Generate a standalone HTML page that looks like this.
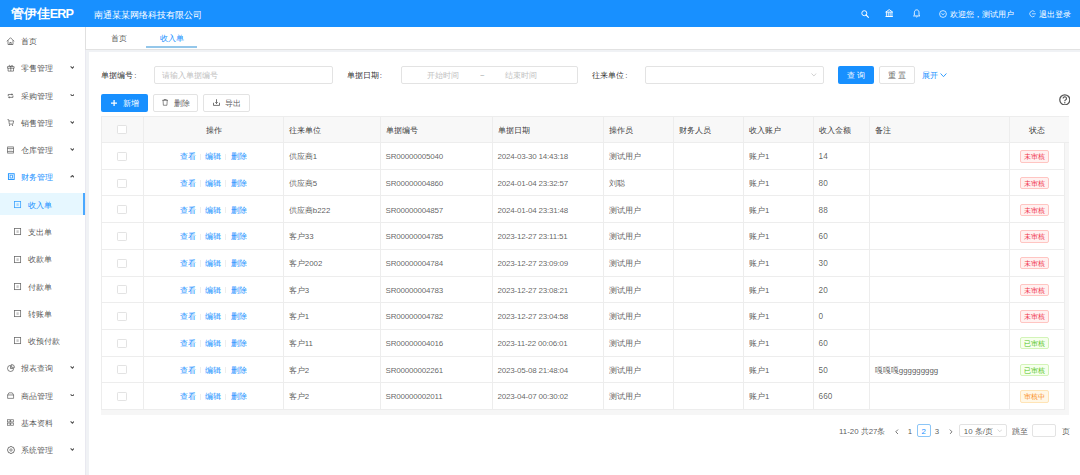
<!DOCTYPE html><html><head><meta charset="utf-8"><style>
html,body{margin:0;padding:0;}
body{width:1080px;height:475px;overflow:hidden;position:relative;background:#f0f2f5;font-family:"Liberation Sans",sans-serif;}
.t{position:absolute;white-space:nowrap;}
.b{position:absolute;box-sizing:border-box;}
</style></head><body>
<div class="b" style="left:0.00px;top:0.00px;width:1080.00px;height:27.00px;background:#1890ff;"></div>
<div class="t" style="left:10.80px;top:3.80px;height:20px;line-height:20px;font-size:12.6px;color:#fff;font-weight:bold;"><span style="font-size:13.2px">管伊佳</span><span style="letter-spacing:-0.9px">ERP</span></div>
<div class="t" style="left:93.60px;top:4.80px;height:20px;line-height:20px;font-size:9.1px;color:#fff;font-weight:normal;">南通某某网络科技有限公司</div>
<svg class="b" style="left:860.60px;top:9.60px;" width="8.00" height="8.00" viewBox="0 0 16 16"><circle cx="6.6" cy="6.4" r="5" fill="none" stroke="#fff" stroke-width="1.9"/><path d="M10.2 10 L14.8 14.6" stroke="#fff" stroke-width="2.2" stroke-linecap="round"/></svg>
<svg class="b" style="left:885.00px;top:9.00px;" width="8.40" height="8.20" viewBox="0 0 16 16"><path d="M1.2 6 L8 1.2 L14.8 6 Z" fill="none" stroke="#fff" stroke-width="1.8" stroke-linejoin="round"/><path d="M2.6 6 V13.5 M6.2 6 V13.5 M9.8 6 V13.5 M13.4 6 V13.5" stroke="#fff" stroke-width="1.7"/><path d="M0.8 14.6 H15.2" stroke="#fff" stroke-width="2"/></svg>
<svg class="b" style="left:913.00px;top:9.40px;" width="7.40" height="8.60" viewBox="0 0 14 16"><path d="M7 1.5 C3.8 1.5 2.6 4 2.6 7 L2.6 11.5 L1 13 L13 13 L11.4 11.5 L11.4 7 C11.4 4 10.2 1.5 7 1.5 Z" fill="none" stroke="#fff" stroke-width="1.6"/><path d="M5.3 14.3 Q7 16 8.7 14.3" fill="none" stroke="#fff" stroke-width="1.4"/></svg>
<svg class="b" style="left:938.90px;top:9.80px;" width="8.00" height="8.00" viewBox="0 0 16 16"><circle cx="8" cy="8" r="6.8" fill="none" stroke="#fff" stroke-width="1.5"/><path d="M4.8 7 Q8 11.5 11.2 7" fill="none" stroke="#fff" stroke-width="1.5"/></svg>
<div class="t" style="left:950.00px;top:4.80px;height:20px;line-height:20px;font-size:7.875px;color:#fff;font-weight:normal;">欢迎您，测试用户</div>
<svg class="b" style="left:1029.00px;top:10.00px;" width="7.40" height="7.60" viewBox="0 0 15 15"><path d="M11.5 3 A6 6 0 1 0 11.5 12" fill="none" stroke="#fff" stroke-width="1.4"/><path d="M6 7.5 L14 7.5" stroke="#fff" stroke-width="1.4"/></svg>
<div class="t" style="left:1039.00px;top:4.80px;height:20px;line-height:20px;font-size:7.875px;color:#fff;font-weight:normal;">退出登录</div>
<div class="b" style="left:0.00px;top:27.00px;width:85.30px;height:448.00px;background:#fff;"></div>
<div class="t" style="left:20.90px;top:32.00px;height:20px;line-height:20px;font-size:7.875px;color:rgba(0,0,0,.7);font-weight:normal;">首页</div>
<svg class="b" style="left:6.40px;top:37.00px;overflow:visible;" width="9.00" height="8.00" viewBox="0 0 16 16"><path d="M0.8 8.6 L8 1.4 L15.2 8.6 M3 6.6 L3 15 L13 15 L13 6.6 M6.6 15 L6.6 11 L9.4 11 L9.4 15" fill="none" stroke="rgba(0,0,0,.62)" stroke-width="1.5" stroke-linejoin="round"/></svg>
<div class="t" style="left:20.90px;top:59.29px;height:20px;line-height:20px;font-size:7.875px;color:rgba(0,0,0,.7);font-weight:normal;">零售管理</div>
<svg class="b" style="left:69.60px;top:66.29px;" width="4.80" height="2.70" viewBox="0 0 10 6"><path d="M1 1 L5 4.8 L9 1" fill="none" stroke="rgba(0,0,0,.68)" stroke-width="2.4"/></svg>
<svg class="b" style="left:7.05px;top:64.45px;overflow:visible;" width="7.60" height="7.60" viewBox="0 0 16 16"><path d="M1 5.5 H15 V9 H1 Z M2.3 9 V15 H13.7 V9 M8 5.5 V15" fill="none" stroke="rgba(0,0,0,.62)" stroke-width="1.5"/><path d="M8 5.5 C6.5 2 3.5 1.5 4.5 5.5 M8 5.5 C9.5 2 12.5 1.5 11.5 5.5" fill="none" stroke="rgba(0,0,0,.62)" stroke-width="1.4"/></svg>
<div class="t" style="left:20.90px;top:86.58px;height:20px;line-height:20px;font-size:7.875px;color:rgba(0,0,0,.7);font-weight:normal;">采购管理</div>
<svg class="b" style="left:69.60px;top:93.58px;" width="4.80" height="2.70" viewBox="0 0 10 6"><path d="M1 1 L5 4.8 L9 1" fill="none" stroke="rgba(0,0,0,.68)" stroke-width="2.4"/></svg>
<svg class="b" style="left:7.35px;top:92.60px;overflow:visible;" width="7.20" height="5.80" viewBox="0 0 16 16"><path d="M1.5 9 V4 H12" fill="none" stroke="rgba(0,0,0,.62)" stroke-width="2.2"/><path d="M11 0.8 L15.2 4 L11 7.2 Z" fill="rgba(0,0,0,.62)"/><path d="M14.5 7 V12 H4" fill="none" stroke="rgba(0,0,0,.62)" stroke-width="2.2"/><path d="M5 8.8 L0.8 12 L5 15.2 Z" fill="rgba(0,0,0,.62)"/></svg>
<div class="t" style="left:20.90px;top:113.87px;height:20px;line-height:20px;font-size:7.875px;color:rgba(0,0,0,.7);font-weight:normal;">销售管理</div>
<svg class="b" style="left:69.60px;top:120.87px;" width="4.80" height="2.70" viewBox="0 0 10 6"><path d="M1 1 L5 4.8 L9 1" fill="none" stroke="rgba(0,0,0,.68)" stroke-width="2.4"/></svg>
<svg class="b" style="left:7.35px;top:118.90px;overflow:visible;" width="7.20" height="6.80" viewBox="0 0 16 16"><path d="M0.5 1.5 H3.5 L5 12 H13.5 L15.2 4.5 H4" fill="none" stroke="rgba(0,0,0,.62)" stroke-width="1.7" stroke-linejoin="round"/><circle cx="5.5" cy="14.6" r="1.4" fill="rgba(0,0,0,.62)"/><circle cx="12.5" cy="14.6" r="1.4" fill="rgba(0,0,0,.62)"/></svg>
<div class="t" style="left:20.90px;top:141.16px;height:20px;line-height:20px;font-size:7.875px;color:rgba(0,0,0,.7);font-weight:normal;">仓库管理</div>
<svg class="b" style="left:69.60px;top:148.16px;" width="4.80" height="2.70" viewBox="0 0 10 6"><path d="M1 1 L5 4.8 L9 1" fill="none" stroke="rgba(0,0,0,.68)" stroke-width="2.4"/></svg>
<svg class="b" style="left:7.00px;top:146.00px;overflow:visible;" width="7.00" height="8.00" viewBox="0 0 16 16"><rect x="1.5" y="1" width="13" height="14" fill="none" stroke="rgba(0,0,0,.62)" stroke-width="1.7"/><path d="M1.5 4.6 H14.5 M1.5 11.4 H14.5" stroke="rgba(0,0,0,.62)" stroke-width="1.5"/><path d="M4.5 8 H11.5" stroke="rgba(0,0,0,.62)" stroke-width="1.2" opacity=".5"/></svg>
<div class="t" style="left:20.90px;top:168.45px;height:20px;line-height:20px;font-size:7.875px;color:#1890ff;font-weight:normal;">财务管理</div>
<svg class="b" style="left:69.60px;top:174.95px;" width="4.80" height="2.70" viewBox="0 0 10 6"><path d="M1 5 L5 1.2 L9 5" fill="none" stroke="rgba(0,0,0,.68)" stroke-width="2.4"/></svg>
<svg class="b" style="left:7.50px;top:172.90px;overflow:visible;" width="6.60" height="7.20" viewBox="0 0 16 16"><rect x="1" y="1" width="14" height="14" fill="none" stroke="#1890ff" stroke-width="2.2"/><rect x="5" y="4.5" width="6" height="7" fill="none" stroke="#1890ff" stroke-width="1.8"/></svg>
<div class="b" style="left:0.00px;top:193.14px;width:85.30px;height:22.20px;background:#e6f7ff;"></div>
<div class="b" style="left:83.40px;top:193.14px;width:1.90px;height:22.20px;background:#4aa8ff;"></div>
<div class="t" style="left:27.50px;top:195.74px;height:20px;line-height:20px;font-size:7.875px;color:#1890ff;font-weight:normal;">收入单</div>
<svg class="b" style="left:13.95px;top:201.04px;overflow:visible;" width="7.20" height="7.20" viewBox="0 0 16 16"><rect x="1.2" y="1.2" width="13.6" height="13.6" fill="none" stroke="#1890ff" stroke-width="1.7" opacity=".85"/><rect x="5.5" y="5" width="5" height="6" fill="#1890ff" opacity=".3"/></svg>
<div class="t" style="left:27.50px;top:223.03px;height:20px;line-height:20px;font-size:7.875px;color:rgba(0,0,0,.7);font-weight:normal;">支出单</div>
<svg class="b" style="left:13.95px;top:228.33px;overflow:visible;" width="7.20" height="7.20" viewBox="0 0 16 16"><rect x="1.2" y="1.2" width="13.6" height="13.6" fill="none" stroke="rgba(0,0,0,.7)" stroke-width="1.7" opacity=".85"/><rect x="5.5" y="5" width="5" height="6" fill="rgba(0,0,0,.7)" opacity=".3"/></svg>
<div class="t" style="left:27.50px;top:250.32px;height:20px;line-height:20px;font-size:7.875px;color:rgba(0,0,0,.7);font-weight:normal;">收款单</div>
<svg class="b" style="left:13.95px;top:255.62px;overflow:visible;" width="7.20" height="7.20" viewBox="0 0 16 16"><rect x="1.2" y="1.2" width="13.6" height="13.6" fill="none" stroke="rgba(0,0,0,.7)" stroke-width="1.7" opacity=".85"/><rect x="5.5" y="5" width="5" height="6" fill="rgba(0,0,0,.7)" opacity=".3"/></svg>
<div class="t" style="left:27.50px;top:277.61px;height:20px;line-height:20px;font-size:7.875px;color:rgba(0,0,0,.7);font-weight:normal;">付款单</div>
<svg class="b" style="left:13.95px;top:282.91px;overflow:visible;" width="7.20" height="7.20" viewBox="0 0 16 16"><rect x="1.2" y="1.2" width="13.6" height="13.6" fill="none" stroke="rgba(0,0,0,.7)" stroke-width="1.7" opacity=".85"/><rect x="5.5" y="5" width="5" height="6" fill="rgba(0,0,0,.7)" opacity=".3"/></svg>
<div class="t" style="left:27.50px;top:304.90px;height:20px;line-height:20px;font-size:7.875px;color:rgba(0,0,0,.7);font-weight:normal;">转账单</div>
<svg class="b" style="left:13.95px;top:310.20px;overflow:visible;" width="7.20" height="7.20" viewBox="0 0 16 16"><rect x="1.2" y="1.2" width="13.6" height="13.6" fill="none" stroke="rgba(0,0,0,.7)" stroke-width="1.7" opacity=".85"/><rect x="5.5" y="5" width="5" height="6" fill="rgba(0,0,0,.7)" opacity=".3"/></svg>
<div class="t" style="left:27.50px;top:332.19px;height:20px;line-height:20px;font-size:7.875px;color:rgba(0,0,0,.7);font-weight:normal;">收预付款</div>
<svg class="b" style="left:13.95px;top:337.49px;overflow:visible;" width="7.20" height="7.20" viewBox="0 0 16 16"><rect x="1.2" y="1.2" width="13.6" height="13.6" fill="none" stroke="rgba(0,0,0,.7)" stroke-width="1.7" opacity=".85"/><rect x="5.5" y="5" width="5" height="6" fill="rgba(0,0,0,.7)" opacity=".3"/></svg>
<div class="t" style="left:20.90px;top:359.48px;height:20px;line-height:20px;font-size:7.875px;color:rgba(0,0,0,.7);font-weight:normal;">报表查询</div>
<svg class="b" style="left:69.60px;top:366.48px;" width="4.80" height="2.70" viewBox="0 0 10 6"><path d="M1 1 L5 4.8 L9 1" fill="none" stroke="rgba(0,0,0,.68)" stroke-width="2.4"/></svg>
<svg class="b" style="left:7.10px;top:364.00px;overflow:visible;" width="8.00" height="8.00" viewBox="0 0 16 16"><path d="M7 2.6 A6.2 6.2 0 1 0 13.4 9 L7 9 Z" fill="none" stroke="rgba(0,0,0,.62)" stroke-width="1.5"/><path d="M9.2 0.9 L9.2 6.8 L15.1 6.8 A6.2 6.2 0 0 0 9.2 0.9 Z" fill="none" stroke="rgba(0,0,0,.62)" stroke-width="1.5"/></svg>
<div class="t" style="left:20.90px;top:386.77px;height:20px;line-height:20px;font-size:7.875px;color:rgba(0,0,0,.7);font-weight:normal;">商品管理</div>
<svg class="b" style="left:69.60px;top:393.77px;" width="4.80" height="2.70" viewBox="0 0 10 6"><path d="M1 1 L5 4.8 L9 1" fill="none" stroke="rgba(0,0,0,.68)" stroke-width="2.4"/></svg>
<svg class="b" style="left:7.05px;top:392.20px;overflow:visible;" width="7.20" height="6.80" viewBox="0 0 16 16"><path d="M1 15 V7 L4 2 H12 L15 7 V15 Z M1 7 H15" fill="none" stroke="rgba(0,0,0,.62)" stroke-width="1.7" stroke-linejoin="round"/></svg>
<div class="t" style="left:20.90px;top:414.06px;height:20px;line-height:20px;font-size:7.875px;color:rgba(0,0,0,.7);font-weight:normal;">基本资料</div>
<svg class="b" style="left:69.60px;top:421.06px;" width="4.80" height="2.70" viewBox="0 0 10 6"><path d="M1 1 L5 4.8 L9 1" fill="none" stroke="rgba(0,0,0,.68)" stroke-width="2.4"/></svg>
<svg class="b" style="left:7.45px;top:419.00px;overflow:visible;" width="6.80" height="7.00" viewBox="0 0 16 16"><rect x="1" y="1.5" width="6.2" height="5.2" fill="none" stroke="rgba(0,0,0,.62)" stroke-width="1.6"/><rect x="8.8" y="1.5" width="6.2" height="5.2" fill="none" stroke="rgba(0,0,0,.62)" stroke-width="1.6"/><rect x="1" y="9.3" width="6.2" height="5.2" fill="none" stroke="rgba(0,0,0,.62)" stroke-width="1.6"/><rect x="8.8" y="9.3" width="6.2" height="5.2" fill="none" stroke="rgba(0,0,0,.62)" stroke-width="1.6"/></svg>
<div class="t" style="left:20.90px;top:441.35px;height:20px;line-height:20px;font-size:7.875px;color:rgba(0,0,0,.7);font-weight:normal;">系统管理</div>
<svg class="b" style="left:69.60px;top:448.35px;" width="4.80" height="2.70" viewBox="0 0 10 6"><path d="M1 1 L5 4.8 L9 1" fill="none" stroke="rgba(0,0,0,.68)" stroke-width="2.4"/></svg>
<svg class="b" style="left:7.10px;top:446.00px;overflow:visible;" width="8.00" height="8.00" viewBox="0 0 16 16"><path d="M6.5 1 H9.5 L10.2 2.8 L12.2 2 L14.2 4.2 L13.2 6 L15 6.8 V9.2 L13.2 10 L14.2 11.8 L12.2 14 L10.2 13.2 L9.5 15 H6.5 L5.8 13.2 L3.8 14 L1.8 11.8 L2.8 10 L1 9.2 V6.8 L2.8 6 L1.8 4.2 L3.8 2 L5.8 2.8 Z" fill="none" stroke="rgba(0,0,0,.62)" stroke-width="1.5" stroke-linejoin="round"/><circle cx="8" cy="8" r="2.4" fill="none" stroke="rgba(0,0,0,.62)" stroke-width="1.4"/></svg>
<div class="b" style="left:85.30px;top:27.00px;width:994.70px;height:22.80px;background:#fff;border-left:1px solid #e0e0e0;border-bottom:1px solid #e2e2e2;"></div>
<div class="t" style="left:111.40px;top:28.70px;height:20px;line-height:20px;font-size:7.875px;color:rgba(0,0,0,.67);font-weight:normal;">首页</div>
<div class="t" style="left:160.00px;top:28.70px;height:20px;line-height:20px;font-size:7.875px;color:#1890ff;font-weight:normal;">收入单</div>
<div class="b" style="left:145.90px;top:46.10px;width:51.10px;height:1.80px;background:#94c7ea;"></div>
<div class="b" style="left:85.30px;top:49.60px;width:1.10px;height:425.40px;background:#e9e9f0;"></div>
<div class="b" style="left:88.60px;top:52.20px;width:991.40px;height:422.80px;background:#fff;"></div>
<div class="t" style="left:101.30px;top:66.10px;height:20px;line-height:20px;font-size:7.875px;color:rgba(0,0,0,.85);font-weight:normal;">单据编号<span style="margin:0 4.5px 0 1px">:</span></div>
<div class="b" style="left:154.20px;top:66.30px;width:179.00px;height:17.40px;background:#fff;border:1px solid #e3e3e3;border-radius:2px;"></div>
<div class="t" style="left:161.70px;top:66.10px;height:20px;line-height:20px;font-size:7.875px;color:#bfbfbf;font-weight:normal;">请输入单据编号</div>
<div class="t" style="left:346.70px;top:66.10px;height:20px;line-height:20px;font-size:7.875px;color:rgba(0,0,0,.85);font-weight:normal;">单据日期<span style="margin:0 4.5px 0 1px">:</span></div>
<div class="b" style="left:400.60px;top:66.30px;width:177.60px;height:17.40px;background:#fff;border:1px solid #e3e3e3;border-radius:2px;"></div>
<div class="t" style="left:343.20px;width:200px;text-align:center;top:66.10px;height:20px;line-height:20px;font-size:7.875px;color:#bfbfbf;font-weight:normal;">开始时间</div>
<div class="t" style="left:382.30px;width:200px;text-align:center;top:66.10px;height:20px;line-height:20px;font-size:7.875px;color:rgba(0,0,0,.45);font-weight:normal;">~</div>
<div class="t" style="left:421.30px;width:200px;text-align:center;top:66.10px;height:20px;line-height:20px;font-size:7.875px;color:#bfbfbf;font-weight:normal;">结束时间</div>
<div class="t" style="left:592.20px;top:66.10px;height:20px;line-height:20px;font-size:7.875px;color:rgba(0,0,0,.85);font-weight:normal;">往来单位<span style="margin:0 4.5px 0 1px">:</span></div>
<div class="b" style="left:645.20px;top:66.30px;width:179.30px;height:17.40px;background:#fff;border:1px solid #e3e3e3;border-radius:2px;"></div>
<svg class="b" style="left:811.20px;top:73.30px;" width="5.80" height="3.40" viewBox="0 0 12 7"><path d="M1 1 L6 6 L11 1" fill="none" stroke="#bfbfbf" stroke-width="1.5"/></svg>
<div class="b" style="left:838.00px;top:66.00px;width:35.70px;height:17.90px;background:#1890ff;border-radius:2px;"></div>
<div class="t" style="left:755.90px;width:200px;text-align:center;top:66.10px;height:20px;line-height:20px;font-size:7.875px;color:#fff;font-weight:normal;">查&nbsp;询</div>
<div class="b" style="left:878.50px;top:66.00px;width:36.20px;height:17.90px;background:#fff;border:1px solid #e3e3e3;border-radius:2px;"></div>
<div class="t" style="left:796.60px;width:200px;text-align:center;top:66.10px;height:20px;line-height:20px;font-size:7.875px;color:rgba(0,0,0,.65);font-weight:normal;">重&nbsp;置</div>
<div class="t" style="left:921.90px;top:66.10px;height:20px;line-height:20px;font-size:7.875px;color:#1890ff;font-weight:normal;">展开</div>
<svg class="b" style="left:940.30px;top:72.60px;" width="7.00" height="4.40" viewBox="0 0 14 9"><path d="M1 1 L7 7.5 L13 1" fill="none" stroke="#1890ff" stroke-width="1.8"/></svg>
<div class="b" style="left:100.90px;top:93.90px;width:46.70px;height:17.80px;background:#1890ff;border-radius:2px;"></div>
<svg class="b" style="left:110.90px;top:99.70px;" width="6.20" height="6.20" viewBox="0 0 12 12"><path d="M6 0 L6 12 M0 6 L12 6" stroke="#fff" stroke-width="2.4"/></svg>
<div class="t" style="left:122.90px;top:93.70px;height:20px;line-height:20px;font-size:7.875px;color:#fff;font-weight:normal;">新增</div>
<div class="b" style="left:152.50px;top:93.90px;width:45.90px;height:17.80px;background:#fff;border:1px solid #e3e3e3;border-radius:2px;"></div>
<svg class="b" style="left:162.00px;top:99.40px;" width="6.30" height="6.80" viewBox="0 0 12 13"><path d="M0.5 2.5 L11.5 2.5 M4 2.5 L4 0.8 L8 0.8 L8 2.5 M2 2.5 L2.6 12 L9.4 12 L10 2.5" fill="none" stroke="rgba(0,0,0,.65)" stroke-width="1.3"/></svg>
<div class="t" style="left:173.50px;top:93.70px;height:20px;line-height:20px;font-size:7.875px;color:rgba(0,0,0,.67);font-weight:normal;">删除</div>
<div class="b" style="left:203.40px;top:93.90px;width:46.40px;height:17.80px;background:#fff;border:1px solid #e3e3e3;border-radius:2px;"></div>
<svg class="b" style="left:213.00px;top:98.80px;" width="7.00" height="7.00" viewBox="0 0 14 14"><path d="M7 0.5 L7 8.5 M4.5 6.5 L7 9 L9.5 6.5" fill="none" stroke="rgba(0,0,0,.7)" stroke-width="1.6"/><path d="M1 7.5 L1 12.8 L13 12.8 L13 7.5" fill="none" stroke="rgba(0,0,0,.6)" stroke-width="1.8"/></svg>
<div class="t" style="left:225.00px;top:93.70px;height:20px;line-height:20px;font-size:7.875px;color:rgba(0,0,0,.67);font-weight:normal;">导出</div>
<svg class="b" style="left:1058.60px;top:93.80px;" width="11.60" height="11.60" viewBox="0 0 24 24"><circle cx="12" cy="12" r="10.4" fill="none" stroke="#555" stroke-width="2.6"/><path d="M8.5 9.4 A3.5 3.5 0 1 1 13.4 12.5 C12.4 13 12 13.6 12 14.6 L12 15.2" fill="none" stroke="#555" stroke-width="2.4"/><circle cx="12" cy="18.2" r="1.5" fill="#555"/></svg>
<div class="b" style="left:101.20px;top:116.00px;width:968.20px;height:26.60px;background:#f8f8f8;"></div>
<div class="b" style="left:1064.60px;top:142.60px;width:4.80px;height:272.00px;background:#f6f6f6;"></div>
<div class="b" style="left:101.20px;top:409.60px;width:968.20px;height:5.00px;background:#f6f6f6;"></div>
<div class="b" style="left:101.20px;top:142.60px;width:963.40px;height:267.00px;background:#fff;"></div>
<div class="b" style="left:101.20px;top:142.10px;width:968.20px;height:1.00px;background:#ededed;"></div>
<div class="b" style="left:101.20px;top:168.78px;width:963.40px;height:1.00px;background:#ededed;"></div>
<div class="b" style="left:101.20px;top:195.46px;width:963.40px;height:1.00px;background:#ededed;"></div>
<div class="b" style="left:101.20px;top:222.14px;width:963.40px;height:1.00px;background:#ededed;"></div>
<div class="b" style="left:101.20px;top:248.82px;width:963.40px;height:1.00px;background:#ededed;"></div>
<div class="b" style="left:101.20px;top:275.50px;width:963.40px;height:1.00px;background:#ededed;"></div>
<div class="b" style="left:101.20px;top:302.18px;width:963.40px;height:1.00px;background:#ededed;"></div>
<div class="b" style="left:101.20px;top:328.86px;width:963.40px;height:1.00px;background:#ededed;"></div>
<div class="b" style="left:101.20px;top:355.54px;width:963.40px;height:1.00px;background:#ededed;"></div>
<div class="b" style="left:101.20px;top:382.22px;width:963.40px;height:1.00px;background:#ededed;"></div>
<div class="b" style="left:101.20px;top:408.90px;width:963.40px;height:1.00px;background:#ededed;"></div>
<div class="b" style="left:101.20px;top:115.50px;width:968.20px;height:1.00px;background:#ededed;"></div>
<div class="b" style="left:100.70px;top:116.00px;width:1.00px;height:293.60px;background:#ededed;"></div>
<div class="b" style="left:143.10px;top:116.00px;width:1.00px;height:293.60px;background:#ededed;"></div>
<div class="b" style="left:283.00px;top:116.00px;width:1.00px;height:293.60px;background:#ededed;"></div>
<div class="b" style="left:380.10px;top:116.00px;width:1.00px;height:293.60px;background:#ededed;"></div>
<div class="b" style="left:492.10px;top:116.00px;width:1.00px;height:293.60px;background:#ededed;"></div>
<div class="b" style="left:602.90px;top:116.00px;width:1.00px;height:293.60px;background:#ededed;"></div>
<div class="b" style="left:672.90px;top:116.00px;width:1.00px;height:293.60px;background:#ededed;"></div>
<div class="b" style="left:743.20px;top:116.00px;width:1.00px;height:293.60px;background:#ededed;"></div>
<div class="b" style="left:813.10px;top:116.00px;width:1.00px;height:293.60px;background:#ededed;"></div>
<div class="b" style="left:869.00px;top:116.00px;width:1.00px;height:293.60px;background:#ededed;"></div>
<div class="b" style="left:1009.00px;top:116.00px;width:1.00px;height:293.60px;background:#ededed;"></div>
<div class="b" style="left:1064.10px;top:142.60px;width:1.00px;height:267.00px;background:#ededed;"></div>
<div class="b" style="left:117.40px;top:124.70px;width:9.20px;height:9.20px;background:#fff;border:1px solid #e3e3e3;border-radius:1.2px;"></div>
<div class="t" style="left:113.55px;width:200px;text-align:center;top:121.10px;height:20px;line-height:20px;font-size:7.875px;color:rgba(0,0,0,.8);font-weight:normal;">操作</div>
<div class="t" style="left:288.80px;top:121.10px;height:20px;line-height:20px;font-size:7.875px;color:rgba(0,0,0,.8);font-weight:normal;">往来单位</div>
<div class="t" style="left:385.90px;top:121.10px;height:20px;line-height:20px;font-size:7.875px;color:rgba(0,0,0,.8);font-weight:normal;">单据编号</div>
<div class="t" style="left:497.90px;top:121.10px;height:20px;line-height:20px;font-size:7.875px;color:rgba(0,0,0,.8);font-weight:normal;">单据日期</div>
<div class="t" style="left:608.70px;top:121.10px;height:20px;line-height:20px;font-size:7.875px;color:rgba(0,0,0,.8);font-weight:normal;">操作员</div>
<div class="t" style="left:678.70px;top:121.10px;height:20px;line-height:20px;font-size:7.875px;color:rgba(0,0,0,.8);font-weight:normal;">财务人员</div>
<div class="t" style="left:749.00px;top:121.10px;height:20px;line-height:20px;font-size:7.875px;color:rgba(0,0,0,.8);font-weight:normal;">收入账户</div>
<div class="t" style="left:818.90px;top:121.10px;height:20px;line-height:20px;font-size:7.875px;color:rgba(0,0,0,.8);font-weight:normal;">收入金额</div>
<div class="t" style="left:874.80px;top:121.10px;height:20px;line-height:20px;font-size:7.875px;color:rgba(0,0,0,.8);font-weight:normal;">备注</div>
<div class="t" style="left:937.05px;width:200px;text-align:center;top:121.10px;height:20px;line-height:20px;font-size:7.875px;color:rgba(0,0,0,.8);font-weight:normal;">状态</div>
<div class="b" style="left:117.40px;top:151.84px;width:9.20px;height:9.20px;background:#fff;border:1px solid #e3e3e3;border-radius:1.2px;"></div>
<div class="t" style="left:179.90px;top:147.34px;height:20px;line-height:20px;font-size:7.875px;color:#1890ff;font-weight:normal;">查看</div>
<div class="b" style="left:200.00px;top:153.64px;width:0.80px;height:6.20px;background:#eeeeee;"></div>
<div class="t" style="left:205.10px;top:147.34px;height:20px;line-height:20px;font-size:7.875px;color:#1890ff;font-weight:normal;">编辑</div>
<div class="b" style="left:225.30px;top:153.64px;width:0.80px;height:6.20px;background:#eeeeee;"></div>
<div class="t" style="left:231.00px;top:147.34px;height:20px;line-height:20px;font-size:7.875px;color:#1890ff;font-weight:normal;">删除</div>
<div class="t" style="left:288.80px;top:147.34px;height:20px;line-height:20px;font-size:7.875px;color:rgba(0,0,0,.67);font-weight:normal;">供应商1</div>
<div class="t" style="left:385.60px;top:147.34px;height:20px;line-height:20px;font-size:8.0px;color:rgba(0,0,0,.64);font-weight:normal;letter-spacing:-0.2px;">SR00000005040</div>
<div class="t" style="left:497.60px;top:147.34px;height:20px;line-height:20px;font-size:8.0px;color:rgba(0,0,0,.64);font-weight:normal;letter-spacing:-0.2px;">2024-03-30 14:43:18</div>
<div class="t" style="left:608.70px;top:147.34px;height:20px;line-height:20px;font-size:7.875px;color:rgba(0,0,0,.67);font-weight:normal;">测试用户</div>
<div class="t" style="left:749.00px;top:147.34px;height:20px;line-height:20px;font-size:7.875px;color:rgba(0,0,0,.67);font-weight:normal;">账户1</div>
<div class="t" style="left:818.60px;top:147.34px;height:20px;line-height:20px;font-size:8.2px;color:rgba(0,0,0,.64);font-weight:normal;">14</div>
<div class="b" style="left:1019.60px;top:150.34px;width:29.60px;height:12.20px;background:#fff1f0;border:1px solid #ffc5c2;border-radius:2px;"></div>
<div class="t" style="left:934.40px;width:200px;text-align:center;top:147.34px;height:20px;line-height:20px;font-size:6.75px;color:#f0304a;font-weight:normal;">未审核</div>
<div class="b" style="left:117.40px;top:178.52px;width:9.20px;height:9.20px;background:#fff;border:1px solid #e3e3e3;border-radius:1.2px;"></div>
<div class="t" style="left:179.90px;top:174.02px;height:20px;line-height:20px;font-size:7.875px;color:#1890ff;font-weight:normal;">查看</div>
<div class="b" style="left:200.00px;top:180.32px;width:0.80px;height:6.20px;background:#eeeeee;"></div>
<div class="t" style="left:205.10px;top:174.02px;height:20px;line-height:20px;font-size:7.875px;color:#1890ff;font-weight:normal;">编辑</div>
<div class="b" style="left:225.30px;top:180.32px;width:0.80px;height:6.20px;background:#eeeeee;"></div>
<div class="t" style="left:231.00px;top:174.02px;height:20px;line-height:20px;font-size:7.875px;color:#1890ff;font-weight:normal;">删除</div>
<div class="t" style="left:288.80px;top:174.02px;height:20px;line-height:20px;font-size:7.875px;color:rgba(0,0,0,.67);font-weight:normal;">供应商5</div>
<div class="t" style="left:385.60px;top:174.02px;height:20px;line-height:20px;font-size:8.0px;color:rgba(0,0,0,.64);font-weight:normal;letter-spacing:-0.2px;">SR00000004860</div>
<div class="t" style="left:497.60px;top:174.02px;height:20px;line-height:20px;font-size:8.0px;color:rgba(0,0,0,.64);font-weight:normal;letter-spacing:-0.2px;">2024-01-04 23:32:57</div>
<div class="t" style="left:608.70px;top:174.02px;height:20px;line-height:20px;font-size:7.875px;color:rgba(0,0,0,.67);font-weight:normal;">刘聪</div>
<div class="t" style="left:749.00px;top:174.02px;height:20px;line-height:20px;font-size:7.875px;color:rgba(0,0,0,.67);font-weight:normal;">账户1</div>
<div class="t" style="left:818.60px;top:174.02px;height:20px;line-height:20px;font-size:8.2px;color:rgba(0,0,0,.64);font-weight:normal;">80</div>
<div class="b" style="left:1019.60px;top:177.02px;width:29.60px;height:12.20px;background:#fff1f0;border:1px solid #ffc5c2;border-radius:2px;"></div>
<div class="t" style="left:934.40px;width:200px;text-align:center;top:174.02px;height:20px;line-height:20px;font-size:6.75px;color:#f0304a;font-weight:normal;">未审核</div>
<div class="b" style="left:117.40px;top:205.20px;width:9.20px;height:9.20px;background:#fff;border:1px solid #e3e3e3;border-radius:1.2px;"></div>
<div class="t" style="left:179.90px;top:200.70px;height:20px;line-height:20px;font-size:7.875px;color:#1890ff;font-weight:normal;">查看</div>
<div class="b" style="left:200.00px;top:207.00px;width:0.80px;height:6.20px;background:#eeeeee;"></div>
<div class="t" style="left:205.10px;top:200.70px;height:20px;line-height:20px;font-size:7.875px;color:#1890ff;font-weight:normal;">编辑</div>
<div class="b" style="left:225.30px;top:207.00px;width:0.80px;height:6.20px;background:#eeeeee;"></div>
<div class="t" style="left:231.00px;top:200.70px;height:20px;line-height:20px;font-size:7.875px;color:#1890ff;font-weight:normal;">删除</div>
<div class="t" style="left:288.80px;top:200.70px;height:20px;line-height:20px;font-size:7.875px;color:rgba(0,0,0,.67);font-weight:normal;">供应商b222</div>
<div class="t" style="left:385.60px;top:200.70px;height:20px;line-height:20px;font-size:8.0px;color:rgba(0,0,0,.64);font-weight:normal;letter-spacing:-0.2px;">SR00000004857</div>
<div class="t" style="left:497.60px;top:200.70px;height:20px;line-height:20px;font-size:8.0px;color:rgba(0,0,0,.64);font-weight:normal;letter-spacing:-0.2px;">2024-01-04 23:31:48</div>
<div class="t" style="left:608.70px;top:200.70px;height:20px;line-height:20px;font-size:7.875px;color:rgba(0,0,0,.67);font-weight:normal;">测试用户</div>
<div class="t" style="left:749.00px;top:200.70px;height:20px;line-height:20px;font-size:7.875px;color:rgba(0,0,0,.67);font-weight:normal;">账户1</div>
<div class="t" style="left:818.60px;top:200.70px;height:20px;line-height:20px;font-size:8.2px;color:rgba(0,0,0,.64);font-weight:normal;">88</div>
<div class="b" style="left:1019.60px;top:203.70px;width:29.60px;height:12.20px;background:#fff1f0;border:1px solid #ffc5c2;border-radius:2px;"></div>
<div class="t" style="left:934.40px;width:200px;text-align:center;top:200.70px;height:20px;line-height:20px;font-size:6.75px;color:#f0304a;font-weight:normal;">未审核</div>
<div class="b" style="left:117.40px;top:231.88px;width:9.20px;height:9.20px;background:#fff;border:1px solid #e3e3e3;border-radius:1.2px;"></div>
<div class="t" style="left:179.90px;top:227.38px;height:20px;line-height:20px;font-size:7.875px;color:#1890ff;font-weight:normal;">查看</div>
<div class="b" style="left:200.00px;top:233.68px;width:0.80px;height:6.20px;background:#eeeeee;"></div>
<div class="t" style="left:205.10px;top:227.38px;height:20px;line-height:20px;font-size:7.875px;color:#1890ff;font-weight:normal;">编辑</div>
<div class="b" style="left:225.30px;top:233.68px;width:0.80px;height:6.20px;background:#eeeeee;"></div>
<div class="t" style="left:231.00px;top:227.38px;height:20px;line-height:20px;font-size:7.875px;color:#1890ff;font-weight:normal;">删除</div>
<div class="t" style="left:288.80px;top:227.38px;height:20px;line-height:20px;font-size:7.875px;color:rgba(0,0,0,.67);font-weight:normal;">客户33</div>
<div class="t" style="left:385.60px;top:227.38px;height:20px;line-height:20px;font-size:8.0px;color:rgba(0,0,0,.64);font-weight:normal;letter-spacing:-0.2px;">SR00000004785</div>
<div class="t" style="left:497.60px;top:227.38px;height:20px;line-height:20px;font-size:8.0px;color:rgba(0,0,0,.64);font-weight:normal;letter-spacing:-0.2px;">2023-12-27 23:11:51</div>
<div class="t" style="left:608.70px;top:227.38px;height:20px;line-height:20px;font-size:7.875px;color:rgba(0,0,0,.67);font-weight:normal;">测试用户</div>
<div class="t" style="left:749.00px;top:227.38px;height:20px;line-height:20px;font-size:7.875px;color:rgba(0,0,0,.67);font-weight:normal;">账户1</div>
<div class="t" style="left:818.60px;top:227.38px;height:20px;line-height:20px;font-size:8.2px;color:rgba(0,0,0,.64);font-weight:normal;">60</div>
<div class="b" style="left:1019.60px;top:230.38px;width:29.60px;height:12.20px;background:#fff1f0;border:1px solid #ffc5c2;border-radius:2px;"></div>
<div class="t" style="left:934.40px;width:200px;text-align:center;top:227.38px;height:20px;line-height:20px;font-size:6.75px;color:#f0304a;font-weight:normal;">未审核</div>
<div class="b" style="left:117.40px;top:258.56px;width:9.20px;height:9.20px;background:#fff;border:1px solid #e3e3e3;border-radius:1.2px;"></div>
<div class="t" style="left:179.90px;top:254.06px;height:20px;line-height:20px;font-size:7.875px;color:#1890ff;font-weight:normal;">查看</div>
<div class="b" style="left:200.00px;top:260.36px;width:0.80px;height:6.20px;background:#eeeeee;"></div>
<div class="t" style="left:205.10px;top:254.06px;height:20px;line-height:20px;font-size:7.875px;color:#1890ff;font-weight:normal;">编辑</div>
<div class="b" style="left:225.30px;top:260.36px;width:0.80px;height:6.20px;background:#eeeeee;"></div>
<div class="t" style="left:231.00px;top:254.06px;height:20px;line-height:20px;font-size:7.875px;color:#1890ff;font-weight:normal;">删除</div>
<div class="t" style="left:288.80px;top:254.06px;height:20px;line-height:20px;font-size:7.875px;color:rgba(0,0,0,.67);font-weight:normal;">客户2002</div>
<div class="t" style="left:385.60px;top:254.06px;height:20px;line-height:20px;font-size:8.0px;color:rgba(0,0,0,.64);font-weight:normal;letter-spacing:-0.2px;">SR00000004784</div>
<div class="t" style="left:497.60px;top:254.06px;height:20px;line-height:20px;font-size:8.0px;color:rgba(0,0,0,.64);font-weight:normal;letter-spacing:-0.2px;">2023-12-27 23:09:09</div>
<div class="t" style="left:608.70px;top:254.06px;height:20px;line-height:20px;font-size:7.875px;color:rgba(0,0,0,.67);font-weight:normal;">测试用户</div>
<div class="t" style="left:749.00px;top:254.06px;height:20px;line-height:20px;font-size:7.875px;color:rgba(0,0,0,.67);font-weight:normal;">账户1</div>
<div class="t" style="left:818.60px;top:254.06px;height:20px;line-height:20px;font-size:8.2px;color:rgba(0,0,0,.64);font-weight:normal;">30</div>
<div class="b" style="left:1019.60px;top:257.06px;width:29.60px;height:12.20px;background:#fff1f0;border:1px solid #ffc5c2;border-radius:2px;"></div>
<div class="t" style="left:934.40px;width:200px;text-align:center;top:254.06px;height:20px;line-height:20px;font-size:6.75px;color:#f0304a;font-weight:normal;">未审核</div>
<div class="b" style="left:117.40px;top:285.24px;width:9.20px;height:9.20px;background:#fff;border:1px solid #e3e3e3;border-radius:1.2px;"></div>
<div class="t" style="left:179.90px;top:280.74px;height:20px;line-height:20px;font-size:7.875px;color:#1890ff;font-weight:normal;">查看</div>
<div class="b" style="left:200.00px;top:287.04px;width:0.80px;height:6.20px;background:#eeeeee;"></div>
<div class="t" style="left:205.10px;top:280.74px;height:20px;line-height:20px;font-size:7.875px;color:#1890ff;font-weight:normal;">编辑</div>
<div class="b" style="left:225.30px;top:287.04px;width:0.80px;height:6.20px;background:#eeeeee;"></div>
<div class="t" style="left:231.00px;top:280.74px;height:20px;line-height:20px;font-size:7.875px;color:#1890ff;font-weight:normal;">删除</div>
<div class="t" style="left:288.80px;top:280.74px;height:20px;line-height:20px;font-size:7.875px;color:rgba(0,0,0,.67);font-weight:normal;">客户3</div>
<div class="t" style="left:385.60px;top:280.74px;height:20px;line-height:20px;font-size:8.0px;color:rgba(0,0,0,.64);font-weight:normal;letter-spacing:-0.2px;">SR00000004783</div>
<div class="t" style="left:497.60px;top:280.74px;height:20px;line-height:20px;font-size:8.0px;color:rgba(0,0,0,.64);font-weight:normal;letter-spacing:-0.2px;">2023-12-27 23:08:21</div>
<div class="t" style="left:608.70px;top:280.74px;height:20px;line-height:20px;font-size:7.875px;color:rgba(0,0,0,.67);font-weight:normal;">测试用户</div>
<div class="t" style="left:749.00px;top:280.74px;height:20px;line-height:20px;font-size:7.875px;color:rgba(0,0,0,.67);font-weight:normal;">账户1</div>
<div class="t" style="left:818.60px;top:280.74px;height:20px;line-height:20px;font-size:8.2px;color:rgba(0,0,0,.64);font-weight:normal;">20</div>
<div class="b" style="left:1019.60px;top:283.74px;width:29.60px;height:12.20px;background:#fff1f0;border:1px solid #ffc5c2;border-radius:2px;"></div>
<div class="t" style="left:934.40px;width:200px;text-align:center;top:280.74px;height:20px;line-height:20px;font-size:6.75px;color:#f0304a;font-weight:normal;">未审核</div>
<div class="b" style="left:117.40px;top:311.92px;width:9.20px;height:9.20px;background:#fff;border:1px solid #e3e3e3;border-radius:1.2px;"></div>
<div class="t" style="left:179.90px;top:307.42px;height:20px;line-height:20px;font-size:7.875px;color:#1890ff;font-weight:normal;">查看</div>
<div class="b" style="left:200.00px;top:313.72px;width:0.80px;height:6.20px;background:#eeeeee;"></div>
<div class="t" style="left:205.10px;top:307.42px;height:20px;line-height:20px;font-size:7.875px;color:#1890ff;font-weight:normal;">编辑</div>
<div class="b" style="left:225.30px;top:313.72px;width:0.80px;height:6.20px;background:#eeeeee;"></div>
<div class="t" style="left:231.00px;top:307.42px;height:20px;line-height:20px;font-size:7.875px;color:#1890ff;font-weight:normal;">删除</div>
<div class="t" style="left:288.80px;top:307.42px;height:20px;line-height:20px;font-size:7.875px;color:rgba(0,0,0,.67);font-weight:normal;">客户1</div>
<div class="t" style="left:385.60px;top:307.42px;height:20px;line-height:20px;font-size:8.0px;color:rgba(0,0,0,.64);font-weight:normal;letter-spacing:-0.2px;">SR00000004782</div>
<div class="t" style="left:497.60px;top:307.42px;height:20px;line-height:20px;font-size:8.0px;color:rgba(0,0,0,.64);font-weight:normal;letter-spacing:-0.2px;">2023-12-27 23:04:58</div>
<div class="t" style="left:608.70px;top:307.42px;height:20px;line-height:20px;font-size:7.875px;color:rgba(0,0,0,.67);font-weight:normal;">测试用户</div>
<div class="t" style="left:749.00px;top:307.42px;height:20px;line-height:20px;font-size:7.875px;color:rgba(0,0,0,.67);font-weight:normal;">账户1</div>
<div class="t" style="left:818.60px;top:307.42px;height:20px;line-height:20px;font-size:8.2px;color:rgba(0,0,0,.64);font-weight:normal;">0</div>
<div class="b" style="left:1019.60px;top:310.42px;width:29.60px;height:12.20px;background:#fff1f0;border:1px solid #ffc5c2;border-radius:2px;"></div>
<div class="t" style="left:934.40px;width:200px;text-align:center;top:307.42px;height:20px;line-height:20px;font-size:6.75px;color:#f0304a;font-weight:normal;">未审核</div>
<div class="b" style="left:117.40px;top:338.60px;width:9.20px;height:9.20px;background:#fff;border:1px solid #e3e3e3;border-radius:1.2px;"></div>
<div class="t" style="left:179.90px;top:334.10px;height:20px;line-height:20px;font-size:7.875px;color:#1890ff;font-weight:normal;">查看</div>
<div class="b" style="left:200.00px;top:340.40px;width:0.80px;height:6.20px;background:#eeeeee;"></div>
<div class="t" style="left:205.10px;top:334.10px;height:20px;line-height:20px;font-size:7.875px;color:#1890ff;font-weight:normal;">编辑</div>
<div class="b" style="left:225.30px;top:340.40px;width:0.80px;height:6.20px;background:#eeeeee;"></div>
<div class="t" style="left:231.00px;top:334.10px;height:20px;line-height:20px;font-size:7.875px;color:#1890ff;font-weight:normal;">删除</div>
<div class="t" style="left:288.80px;top:334.10px;height:20px;line-height:20px;font-size:7.875px;color:rgba(0,0,0,.67);font-weight:normal;">客户11</div>
<div class="t" style="left:385.60px;top:334.10px;height:20px;line-height:20px;font-size:8.0px;color:rgba(0,0,0,.64);font-weight:normal;letter-spacing:-0.2px;">SR00000004016</div>
<div class="t" style="left:497.60px;top:334.10px;height:20px;line-height:20px;font-size:8.0px;color:rgba(0,0,0,.64);font-weight:normal;letter-spacing:-0.2px;">2023-11-22 00:06:01</div>
<div class="t" style="left:608.70px;top:334.10px;height:20px;line-height:20px;font-size:7.875px;color:rgba(0,0,0,.67);font-weight:normal;">测试用户</div>
<div class="t" style="left:749.00px;top:334.10px;height:20px;line-height:20px;font-size:7.875px;color:rgba(0,0,0,.67);font-weight:normal;">账户1</div>
<div class="t" style="left:818.60px;top:334.10px;height:20px;line-height:20px;font-size:8.2px;color:rgba(0,0,0,.64);font-weight:normal;">60</div>
<div class="b" style="left:1019.60px;top:337.10px;width:29.60px;height:12.20px;background:#f6ffed;border:1px solid #d3f4b8;border-radius:2px;"></div>
<div class="t" style="left:934.40px;width:200px;text-align:center;top:334.10px;height:20px;line-height:20px;font-size:6.75px;color:#52c41a;font-weight:normal;">已审核</div>
<div class="b" style="left:117.40px;top:365.28px;width:9.20px;height:9.20px;background:#fff;border:1px solid #e3e3e3;border-radius:1.2px;"></div>
<div class="t" style="left:179.90px;top:360.78px;height:20px;line-height:20px;font-size:7.875px;color:#1890ff;font-weight:normal;">查看</div>
<div class="b" style="left:200.00px;top:367.08px;width:0.80px;height:6.20px;background:#eeeeee;"></div>
<div class="t" style="left:205.10px;top:360.78px;height:20px;line-height:20px;font-size:7.875px;color:#1890ff;font-weight:normal;">编辑</div>
<div class="b" style="left:225.30px;top:367.08px;width:0.80px;height:6.20px;background:#eeeeee;"></div>
<div class="t" style="left:231.00px;top:360.78px;height:20px;line-height:20px;font-size:7.875px;color:#1890ff;font-weight:normal;">删除</div>
<div class="t" style="left:288.80px;top:360.78px;height:20px;line-height:20px;font-size:7.875px;color:rgba(0,0,0,.67);font-weight:normal;">客户2</div>
<div class="t" style="left:385.60px;top:360.78px;height:20px;line-height:20px;font-size:8.0px;color:rgba(0,0,0,.64);font-weight:normal;letter-spacing:-0.2px;">SR00000002261</div>
<div class="t" style="left:497.60px;top:360.78px;height:20px;line-height:20px;font-size:8.0px;color:rgba(0,0,0,.64);font-weight:normal;letter-spacing:-0.2px;">2023-05-08 21:48:04</div>
<div class="t" style="left:608.70px;top:360.78px;height:20px;line-height:20px;font-size:7.875px;color:rgba(0,0,0,.67);font-weight:normal;">测试用户</div>
<div class="t" style="left:749.00px;top:360.78px;height:20px;line-height:20px;font-size:7.875px;color:rgba(0,0,0,.67);font-weight:normal;">账户1</div>
<div class="t" style="left:818.60px;top:360.78px;height:20px;line-height:20px;font-size:8.2px;color:rgba(0,0,0,.64);font-weight:normal;">50</div>
<div class="t" style="left:874.80px;top:360.78px;height:20px;line-height:20px;font-size:7.875px;color:rgba(0,0,0,.67);font-weight:normal;">嘎嘎嘎ggggggggg</div>
<div class="b" style="left:1019.60px;top:363.78px;width:29.60px;height:12.20px;background:#f6ffed;border:1px solid #d3f4b8;border-radius:2px;"></div>
<div class="t" style="left:934.40px;width:200px;text-align:center;top:360.78px;height:20px;line-height:20px;font-size:6.75px;color:#52c41a;font-weight:normal;">已审核</div>
<div class="b" style="left:117.40px;top:391.96px;width:9.20px;height:9.20px;background:#fff;border:1px solid #e3e3e3;border-radius:1.2px;"></div>
<div class="t" style="left:179.90px;top:387.46px;height:20px;line-height:20px;font-size:7.875px;color:#1890ff;font-weight:normal;">查看</div>
<div class="b" style="left:200.00px;top:393.76px;width:0.80px;height:6.20px;background:#eeeeee;"></div>
<div class="t" style="left:205.10px;top:387.46px;height:20px;line-height:20px;font-size:7.875px;color:#1890ff;font-weight:normal;">编辑</div>
<div class="b" style="left:225.30px;top:393.76px;width:0.80px;height:6.20px;background:#eeeeee;"></div>
<div class="t" style="left:231.00px;top:387.46px;height:20px;line-height:20px;font-size:7.875px;color:#1890ff;font-weight:normal;">删除</div>
<div class="t" style="left:288.80px;top:387.46px;height:20px;line-height:20px;font-size:7.875px;color:rgba(0,0,0,.67);font-weight:normal;">客户2</div>
<div class="t" style="left:385.60px;top:387.46px;height:20px;line-height:20px;font-size:8.0px;color:rgba(0,0,0,.64);font-weight:normal;letter-spacing:-0.2px;">SR00000002011</div>
<div class="t" style="left:497.60px;top:387.46px;height:20px;line-height:20px;font-size:8.0px;color:rgba(0,0,0,.64);font-weight:normal;letter-spacing:-0.2px;">2023-04-07 00:30:02</div>
<div class="t" style="left:608.70px;top:387.46px;height:20px;line-height:20px;font-size:7.875px;color:rgba(0,0,0,.67);font-weight:normal;">测试用户</div>
<div class="t" style="left:749.00px;top:387.46px;height:20px;line-height:20px;font-size:7.875px;color:rgba(0,0,0,.67);font-weight:normal;">账户1</div>
<div class="t" style="left:818.60px;top:387.46px;height:20px;line-height:20px;font-size:8.2px;color:rgba(0,0,0,.64);font-weight:normal;">660</div>
<div class="b" style="left:1019.60px;top:390.46px;width:29.60px;height:12.20px;background:#fff7e6;border:1px solid #ffe4b6;border-radius:2px;"></div>
<div class="t" style="left:934.40px;width:200px;text-align:center;top:387.46px;height:20px;line-height:20px;font-size:6.75px;color:#fa8c16;font-weight:normal;">审核中</div>
<div class="t" style="left:839.00px;top:421.70px;height:20px;line-height:20px;font-size:7.875px;color:rgba(0,0,0,.67);font-weight:normal;">11-20 共27条</div>
<svg class="b" style="left:894.80px;top:428.50px;" width="3.80" height="5.60" viewBox="0 0 6 10"><path d="M5 1 L1 5 L5 9" fill="none" stroke="rgba(0,0,0,.6)" stroke-width="1.6"/></svg>
<div class="t" style="left:810.00px;width:200px;text-align:center;top:421.70px;height:20px;line-height:20px;font-size:7.875px;color:rgba(0,0,0,.67);font-weight:normal;">1</div>
<div class="b" style="left:916.90px;top:424.10px;width:13.80px;height:13.40px;background:#fff;border:1px solid #8cc6f7;border-radius:2px;"></div>
<div class="t" style="left:823.70px;width:200px;text-align:center;top:421.70px;height:20px;line-height:20px;font-size:7.875px;color:#1890ff;font-weight:normal;">2</div>
<div class="t" style="left:837.00px;width:200px;text-align:center;top:421.70px;height:20px;line-height:20px;font-size:7.875px;color:rgba(0,0,0,.67);font-weight:normal;">3</div>
<svg class="b" style="left:949.30px;top:428.50px;" width="3.80" height="5.60" viewBox="0 0 6 10"><path d="M1 1 L5 5 L1 9" fill="none" stroke="rgba(0,0,0,.6)" stroke-width="1.6"/></svg>
<div class="b" style="left:959.40px;top:424.30px;width:47.20px;height:13.00px;background:#fff;border:1px solid #e3e3e3;border-radius:2px;"></div>
<div class="t" style="left:963.80px;top:421.70px;height:20px;line-height:20px;font-size:7.875px;color:rgba(0,0,0,.67);font-weight:normal;">10 条/页</div>
<svg class="b" style="left:996.70px;top:429.40px;" width="5.60" height="3.20" viewBox="0 0 12 7"><path d="M1 1 L6 6 L11 1" fill="none" stroke="#bfbfbf" stroke-width="1.4"/></svg>
<div class="t" style="left:1012.00px;top:421.70px;height:20px;line-height:20px;font-size:7.875px;color:rgba(0,0,0,.67);font-weight:normal;">跳至</div>
<div class="b" style="left:1032.40px;top:424.30px;width:24.10px;height:13.00px;background:#fff;border:1px solid #e3e3e3;border-radius:2px;"></div>
<div class="t" style="left:1061.90px;top:421.70px;height:20px;line-height:20px;font-size:7.875px;color:rgba(0,0,0,.67);font-weight:normal;">页</div>
</body></html>
